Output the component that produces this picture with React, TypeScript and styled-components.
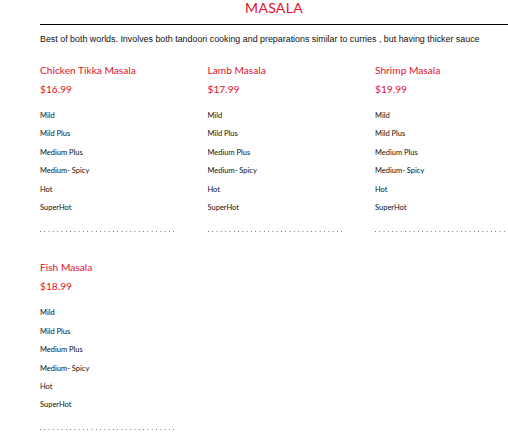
import React from "react";
import styled, { createGlobalStyle } from "styled-components";

const GlobalStyle = createGlobalStyle`
  html, body {
    margin: 0;
    padding: 0;
    background: #fff;
    overflow: hidden;
  }
`;

const Page = styled.div`
  margin-left: 40px;
  width: 468px;
  font-family: "Lato", "Liberation Sans", sans-serif;
`;

const Title = styled.h1`
  margin: 0;
  height: 24px;
  font-size: 14px;
  line-height: 16px;
  font-weight: 400;
  letter-spacing: 0.3px;
  text-align: center;
  color: #e4102c;
`;

const Rule = styled.hr`
  margin: 0;
  border: 0;
  height: 1px;
  background: #000;
`;

const Intro = styled.p`
  margin: 0;
  padding-top: 9px;
  height: 27px;
  font-family: "Liberation Sans", Arial, sans-serif;
  font-size: 8.9px;
  line-height: 10px;
  color: #111;
  white-space: nowrap;
`;

const Grid = styled.div`
  display: grid;
  grid-template-columns: repeat(3, 134px);
  column-gap: 33.5px;
  row-gap: 26px;
`;

const Item = styled.div`
  display: flex;
  flex-direction: column;
`;

const Name = styled.div`
  font-size: 10.2px;
  line-height: 19px;
  color: #e4102c;
  white-space: nowrap;
`;

const Price = styled.div`
  font-size: 10.2px;
  line-height: 19px;
  color: #e4102c;
  margin-bottom: 8px;
`;

const Option = styled.div`
  font-size: 7.5px;
  line-height: 18.4px;
  color: #111;
  white-space: nowrap;
`;

const Dots = styled.div`
  margin-top: 14px;
  height: 1px;
  background-image: linear-gradient(to right, #6a6a8a 1px, transparent 1px);
  background-size: 4.3px 1px;
`;

const spiceLevels = ["Mild", "Mild Plus", "Medium Plus", "Medium- Spicy", "Hot", "SuperHot"];

const dishes = [
  { name: "Chicken Tikka Masala", price: "$16.99" },
  { name: "Lamb Masala", price: "$17.99" },
  { name: "Shrimp Masala", price: "$19.99" },
  { name: "Fish Masala", price: "$18.99" },
];

export default function App() {
  return (
    <>
      <GlobalStyle />
      <Page>
        <Title>MASALA</Title>
        <Rule />
        <Intro>
          Best of both worlds. Involves both tandoori cooking and preparations similar to curries , but having thicker sauce
        </Intro>
        <Grid>
          {dishes.map((d) => (
            <Item key={d.name}>
              <Name>{d.name}</Name>
              <Price>{d.price}</Price>
              {spiceLevels.map((s) => (
                <Option key={s}>{s}</Option>
              ))}
              <Dots />
            </Item>
          ))}
        </Grid>
      </Page>
    </>
  );
}
